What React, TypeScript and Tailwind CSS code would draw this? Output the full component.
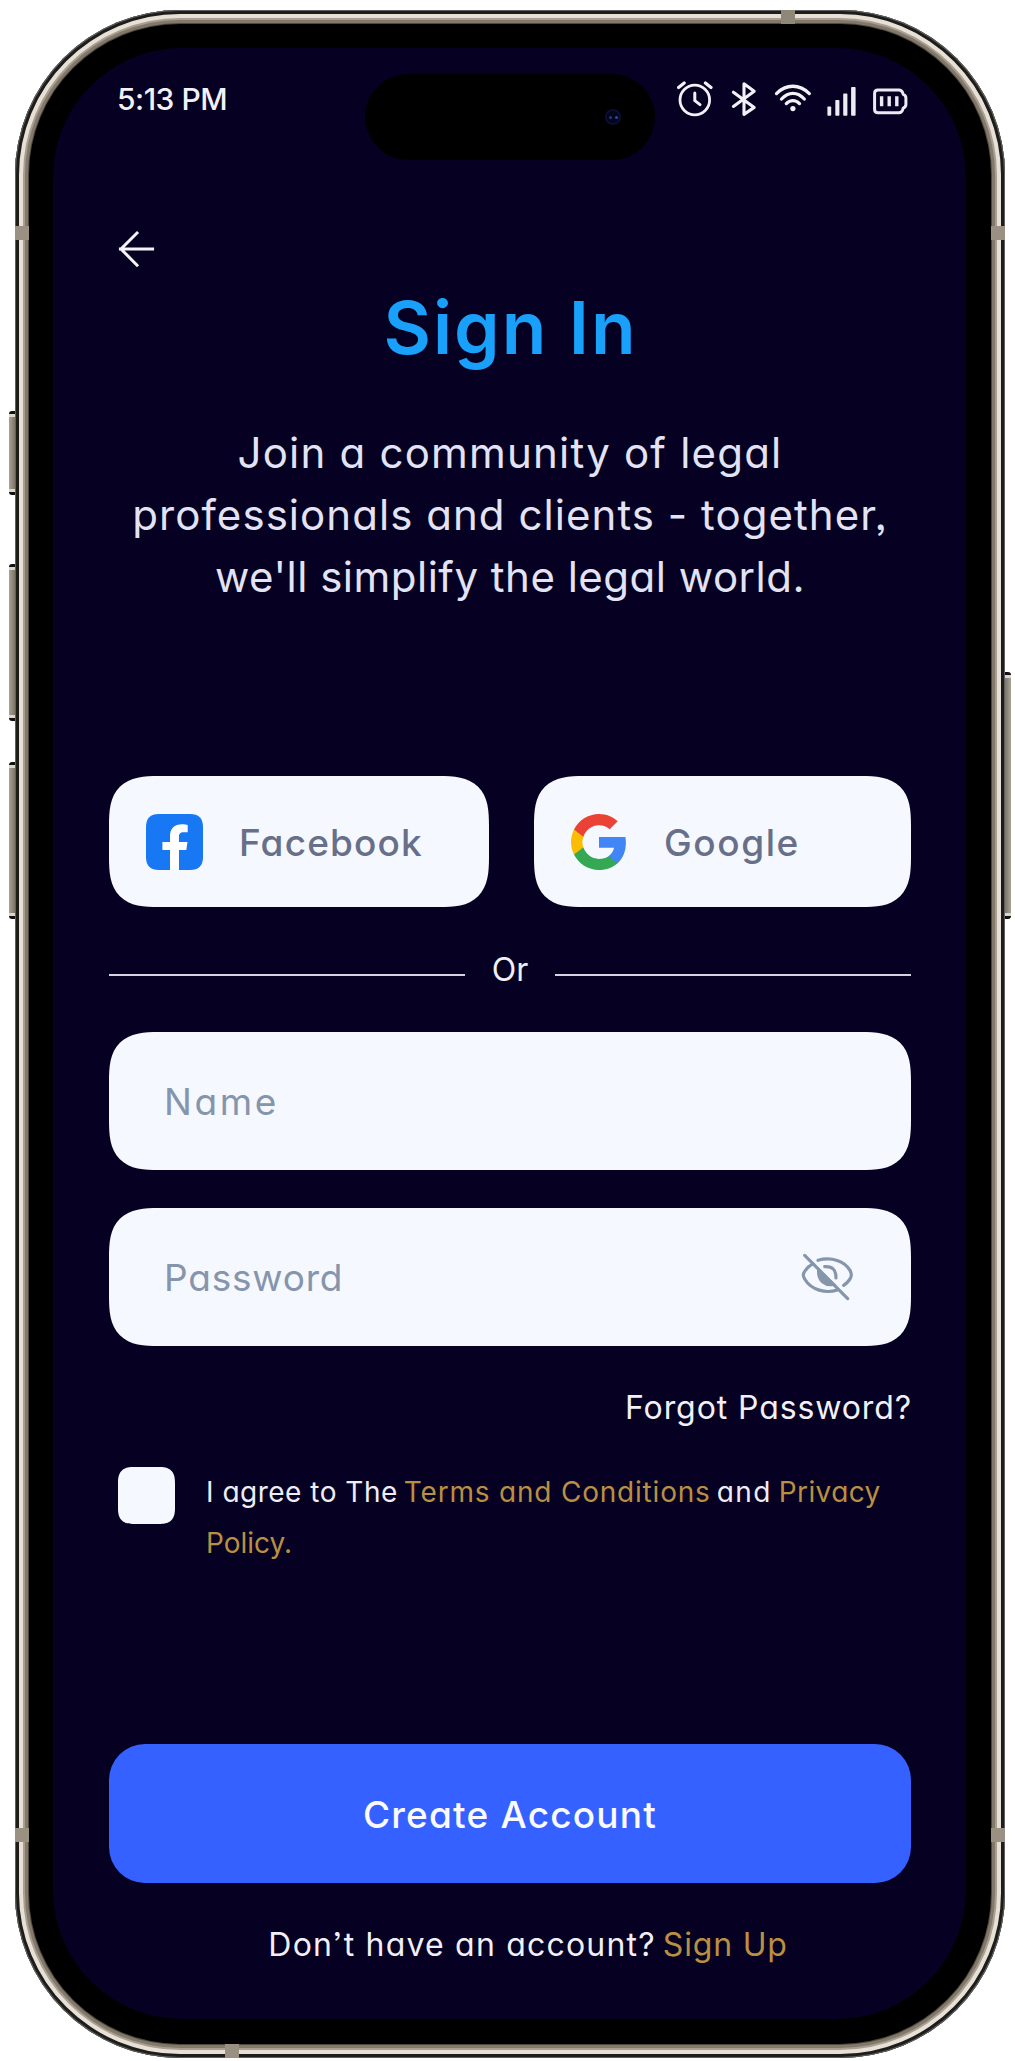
import type { ReactNode } from "react";

function AlarmIcon() {
  return (
    <svg width="36" height="38" viewBox="677 80 36 38" fill="none" stroke="#f2f1f7" strokeWidth="2.8" strokeLinecap="round">
      <circle cx="694.8" cy="100" r="14.8" />
      <path d="M678.6 87.6 684.2 83M711 87.6 705.4 83" strokeWidth="3.2" />
      <path d="M694.8 93V100.6L700 104.6" strokeWidth="3" />
    </svg>
  );
}

function BluetoothIcon() {
  return (
    <svg width="26" height="38" viewBox="731 80 26 38" fill="none" stroke="#f2f1f7" strokeWidth="3.1" strokeLinecap="round" strokeLinejoin="round">
      <path d="M733.4 92.2 754.2 107.4 744 114.4V83.8L754.2 91.2 733.4 106.4" />
    </svg>
  );
}

function WifiIcon() {
  return (
    <svg width="38" height="38" viewBox="773.5 80 38 38" fill="none" stroke="#f2f1f7" strokeWidth="3.3" strokeLinecap="round">
      <path d="M776 93.6C785.5 83.8 799 83.8 808.8 93.6" />
      <path d="M781 99C788 91.4 797 91.4 803.8 99" />
      <path d="M785.8 103.6C789.6 99.6 795.2 99.6 799 103.6" />
      <circle cx="792.4" cy="108.6" r="2.6" fill="#f2f1f7" stroke="none" />
    </svg>
  );
}

function SignalIcon() {
  return (
    <svg width="29" height="38" viewBox="0 -6 29 38" fill="#eceaf3">
      <rect x="0.4" y="20.4" width="3.8" height="9.4" rx="0.8" />
      <rect x="8.3" y="14" width="4.1" height="15.8" rx="0.8" />
      <rect x="16.2" y="7.6" width="4.2" height="22.2" rx="0.8" />
      <rect x="24.1" y="1" width="4.5" height="28.8" rx="0.8" />
    </svg>
  );
}

function BatteryIcon() {
  return (
    <svg width="36" height="38" viewBox="0 -6 36 38" fill="none" stroke="#eceaf3" strokeWidth="3" strokeLinejoin="round">
      <path d="M6 3.9H27Q29.6 3.9 30.6 6.6L31.2 8.4Q33.9 9.4 33.9 12V18.6Q33.9 21.2 31.2 22.2L30.6 24Q29.6 26.7 27 26.7H6Q2.6 26.7 2.6 23.4V7.2Q2.6 3.9 6 3.9Z" />
      <path d="M9.6 10.2V20.2M17.2 10.2V20.2M24.8 10.2V20.2" strokeWidth="3.4" />
    </svg>
  );
}

function BackArrow() {
  return (
    <svg width="38" height="38" viewBox="0 0 38 38" fill="none" stroke="#f4f3fa" strokeWidth="3" strokeLinecap="square">
      <path d="M3.4 19H35.6M20 3 4 19 20 35.2" />
    </svg>
  );
}

function FacebookIcon() {
  return (
    <svg width="57" height="56" viewBox="0 0 57 56">
      <path d="M13 0H44Q57 0 57 13V43Q57 56 44 56H13Q0 56 0 43V13Q0 0 13 0Z" fill="#1877f2" />
      <path d="M24 56V36H16.4V28H24V22C24 14.5 28.5 10.3 36 10.3C38.3 10.3 40.5 10.6 41.7 10.9V18.3H37.5C34 18.3 33 20 33 22.5V28H41.5L40.3 36H33V56Z" fill="#fff" />
    </svg>
  );
}

function GoogleIcon() {
  return (
    <svg width="56" height="56" viewBox="1 1 22 22">
      <path fill="#4285F4" d="M22.56 12.25c0-.78-.07-1.53-.2-2.25H12v4.26h5.92c-.26 1.37-1.04 2.53-2.21 3.31v2.77h3.57c2.08-1.92 3.28-4.74 3.28-8.09z" />
      <path fill="#34A853" d="M12 23c2.97 0 5.46-.98 7.28-2.66l-3.57-2.77c-.98.66-2.23 1.06-3.71 1.06-2.86 0-5.29-1.93-6.16-4.53H2.18v2.84C3.99 20.53 7.7 23 12 23z" />
      <path fill="#FBBC05" d="M5.84 14.09c-.22-.66-.35-1.36-.35-2.09s.13-1.43.35-2.09V7.07H2.18C1.43 8.55 1 10.22 1 12s.43 3.45 1.18 4.93l2.85-2.22.81-.62z" />
      <path fill="#EA4335" d="M12 5.38c1.62 0 3.06.56 4.21 1.64l3.15-3.15C17.45 2.09 14.97 1 12 1 7.7 1 3.99 3.47 2.18 7.07l3.66 2.84c.87-2.6 3.3-4.53 6.16-4.53z" />
    </svg>
  );
}

function EyeOffIcon() {
  return (
    <svg width="55" height="50" viewBox="60 68 165 150" fill="none" stroke="#8595ab" strokeWidth="9.5" strokeLinecap="round">
      <path d="M74 78 203 208" />
      <path d="M114 93C155 81 194 96 210 123Q218 137 210 149Q203 160 191 168" />
      <path d="M99 103Q83 112 74 126Q66 137 74 149C94 183 138 193 172 182" />
      <path d="M134 112Q168 109 168 146" />
      <path d="M116 122 160 165C138 170 113 156 116 122Z" fill="#8595ab" />
    </svg>
  );
}

function SideButton({ className }: { className: string }) {
  return (
    <div className={`absolute w-3 rounded-[3px] border-y-[3px] border-[#111] bg-linear-to-r ${className}`}>
      <div className="h-[3px] bg-[#ddd6cb]" />
      <div className="absolute inset-x-0 bottom-0 h-[3px] bg-[#ddd6cb]" />
    </div>
  );
}

function SocialButton({ icon, className, children }: { icon: ReactNode; className: string; children: ReactNode }) {
  return (
    <button className={`flex h-full items-center rounded-[50px] bg-[#f5f8ff] text-[37px] font-medium text-[#686f88] [corner-shape:superellipse(1.5)] ${className}`}>
      {icon}
      <span className="pt-0.5">{children}</span>
    </button>
  );
}

export default function App() {
  return (
    <div className="relative h-[2061px] w-[1015px] overflow-hidden bg-white pt-[10px] pl-[15px] font-['Inter',sans-serif] [font-feature-settings:'cv11','ss03']">
      <SideButton className="top-[411px] left-[9px] h-[84px] from-[#a8a398] via-[#7d7464] to-[#3c382f]" />
      <SideButton className="top-[564px] left-[9px] h-[157px] from-[#a8a398] via-[#7d7464] to-[#3c382f]" />
      <SideButton className="top-[762px] left-[9px] h-[157px] from-[#a8a398] via-[#7d7464] to-[#3c382f]" />
      <SideButton className="top-[672px] left-[999px] h-[247px] from-[#3c382f] via-[#7d7464] to-[#a8a398]" />

      <div className="relative h-[2048px] w-[990px] overflow-hidden rounded-[165px] bg-black px-[38px] py-[38px] shadow-[inset_0_0_0_1px_#5d5f63,inset_0_0_0_4px_#1f1d1a,inset_0_0_0_8px_#e7e0d6,inset_0_0_0_10px_#a89f92,inset_0_0_0_13px_#82796b,inset_0_0_0_14px_#4f483d]">
        <div className="absolute top-[216px] left-0 h-[14px] w-[14px] bg-[#9a9182]" />
        <div className="absolute top-[216px] right-0 h-[14px] w-[14px] bg-[#9a9182]" />
        <div className="absolute top-[1818px] left-0 h-[14px] w-[14px] bg-[#9a9182]" />
        <div className="absolute top-[1818px] right-0 h-[14px] w-[14px] bg-[#9a9182]" />
        <div className="absolute top-0 left-[766px] h-[14px] w-[14px] bg-[#8f8778]" />
        <div className="absolute bottom-0 left-[210px] h-[14px] w-[14px] bg-[#9a9182]" />

        <div className="relative flex h-[1971px] w-[913px] flex-col rounded-[129px] bg-[#060022] pr-[55px] pl-14">
          <div className="absolute top-[26px] left-[312px] flex h-[86px] w-[290px] items-center justify-end rounded-full bg-black pr-[34px]">
            <div className="flex size-4 items-center justify-center gap-[3px] rounded-full border-2 border-[#0a0e33] bg-[#03051a]">
              <span className="size-[3px] rounded-full bg-[#1f3a86]" />
              <span className="size-[3px] rounded-full bg-[#2b4aa8]" />
            </div>
          </div>

          <header className="flex h-[101px] shrink-0 items-center justify-between pr-[3px] pl-2">
            <span className="pt-0.5 text-[30px] font-medium tracking-[-0.5px] text-[#f2f1f7]">5:13 PM</span>
            <div className="flex items-center">
              <AlarmIcon />
              <div className="ml-[18px]"><BluetoothIcon /></div>
              <div className="ml-[17px]"><WifiIcon /></div>
              <div className="ml-[15px]"><SignalIcon /></div>
              <div className="ml-4"><BatteryIcon /></div>
            </div>
          </header>

          <button className="mt-[81px] ml-2 size-[38px] shrink-0"><BackArrow /></button>

          <h1 className="mt-[17px] h-[85px] shrink-0 pl-px text-center text-[73px] leading-[85px] font-semibold tracking-[2px] text-[#18a0fb]">
            Sign In
          </h1>

          <p className="mt-[52px] flex h-[186px] shrink-0 flex-col items-center text-[42px] leading-[62.2px] whitespace-nowrap text-[#e2e3f5]">
            <span className="tracking-[1.2px]">Join a community of legal</span>
            <span className="tracking-[1.05px]">professionals and clients - together,</span>
            <span className="tracking-[0.5px]">we'll simplify the legal world.</span>
          </p>

          <div className="mt-[168px] flex h-[131px] shrink-0 justify-between">
            <SocialButton icon={<FacebookIcon />} className="w-[380px] gap-[36px] pl-[37px] tracking-[1.15px]">Facebook</SocialButton>
            <SocialButton icon={<GoogleIcon />} className="w-[377px] gap-[37px] pl-[37px] tracking-[1.6px]">Google</SocialButton>
          </div>

          <div className="mt-12 flex h-10 shrink-0 items-center justify-between">
            <div className="h-0.5 w-[356px] bg-[#d3d3e2]" />
            <span className="pb-[11px] text-[32px] text-[#f1f0f8]">Or</span>
            <div className="h-0.5 w-[356px] bg-[#d3d3e2]" />
          </div>

          <div className="mt-[37px] flex h-[138px] shrink-0 items-center rounded-[50px] bg-[#f5f8ff] px-[55px] pt-0.5 text-[37px] tracking-[2.6px] text-[#8595ab] [corner-shape:superellipse(1.5)]">
            Name
          </div>
          <div className="mt-[38px] flex h-[138px] shrink-0 items-center justify-between rounded-[50px] bg-[#f5f8ff] pr-14 pl-[55px] text-[37px] tracking-[0.8px] text-[#8595ab] [corner-shape:superellipse(1.5)]">
            <span className="pt-0.5">Password</span>
            <EyeOffIcon />
          </div>

          <a className="mt-[38px] -mr-px h-[47px] shrink-0 text-right text-[32px] leading-[47px] tracking-[0.9px] text-[#f1f0f8]">Forgot Password?</a>

          <div className="mt-[35px] flex h-[101px] shrink-0 gap-[31px] pl-[9px] text-[28px] leading-[50.5px] whitespace-nowrap text-[#eeedf7]">
            <span className="mt-px size-[57px] shrink-0 rounded-[16px] bg-[#f5f8ff] [corner-shape:superellipse(1.4)]" />
            <div className="pt-px">
              <div className="flex">
                <span className="mr-1.5 tracking-[0.5px]">I agree to The</span>
                <span className="mr-1.5 tracking-[0.8px] text-[#b98f42]">Terms and Conditions</span>
                <span className="mr-[7px] tracking-[1.4px]">and</span>
                <span className="tracking-[0.4px] text-[#b98f42]">Privacy</span>
              </div>
              <div className="text-[#b98f42]">Policy.</div>
            </div>
          </div>

          <button className="mt-[177px] h-[139px] shrink-0 rounded-[36px] bg-[#3461ff] pt-0.5 text-[37px] font-medium tracking-[1.2px] text-[#fafaff]">
            Create Account
          </button>

          <div className="mt-[38px] flex h-12 shrink-0 items-center justify-center gap-[7px] pl-[36px] text-[32px] whitespace-nowrap text-[#f1f0f8]">
            <span className="tracking-[1.2px]">Don’t have an account?</span>
            <a className="tracking-[0.8px] text-[#b98f42]">Sign Up</a>
          </div>
        </div>
      </div>
    </div>
  );
}
